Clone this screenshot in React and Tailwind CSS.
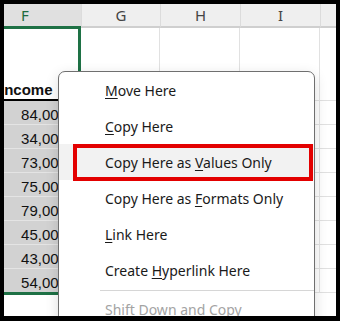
import React from 'react';

const values = ['84,000', '34,000', '73,000', '75,000', '79,000', '45,000', '43,000', '54,000'];

const Key = ({ children }) => (
    <span className="underline underline-offset-2 decoration-1">{children}</span>
);

const MenuItem = ({ children, active, disabled }) => (
    <div className={`relative h-[36px] flex items-center pl-[46px] ${active ? 'bg-[#f2f2f2]' : ''} ${disabled ? 'text-[#a3a3a3]' : 'text-[#1a1a1a]'}`}>
        <span>{children}</span>
        {active && (
            // red annotation box drawn over the hovered item
            <div className="absolute left-[14px] right-[1px] top-0 bottom-[-1px] border-4 border-[#e30000]" />
        )}
    </div>
);

const GridColumn = ({ width, last }) => (
    <div className={`flex flex-col shrink-0 ${last ? 'flex-1' : 'border-r border-[#e1e1e1]'}`} style={{ width }}>
        <div className="h-[73px] border-b border-[#e1e1e1]" />
        {values.map((v) => (
            <div key={v} className="h-[24px] border-b border-[#e1e1e1]" />
        ))}
    </div>
);

const App = () => {
    return (
        <div className="w-[340px] h-[321px] bg-black pt-[4px] pl-[4px] pr-[4px] pb-[5px]">
            <div className="relative w-full h-full overflow-hidden bg-white">
                {/* Column headers */}
                <div className="flex items-start h-[25px] font-['Noto_Sans',sans-serif] text-[15px]">
                    <div className="w-[112px] ml-[-35px] shrink-0 h-[25px] bg-[#e0e0e0] border-b-[3px] border-[#1e7145] flex items-center justify-center text-[#1e6b3f]">
                        F
                    </div>
                    <div className="w-[79px] shrink-0 h-[24px] bg-[#efefef] border-b-2 border-l border-[#cfcfcf] border-l-[#dcdcdc] flex items-center justify-center text-[#444]">
                        G
                    </div>
                    <div className="w-[80px] shrink-0 h-[24px] bg-[#efefef] border-b-2 border-l border-[#cfcfcf] border-l-[#dcdcdc] flex items-center justify-center text-[#444]">
                        H
                    </div>
                    <div className="w-[80px] shrink-0 h-[24px] bg-[#efefef] border-b-2 border-l border-[#cfcfcf] border-l-[#dcdcdc] flex items-center justify-center text-[#444]">
                        I
                    </div>
                    <div className="flex-1 h-[24px] bg-[#efefef] border-b-2 border-l border-[#cfcfcf] border-l-[#dcdcdc]" />
                </div>

                {/* Sheet body */}
                <div className="flex items-start font-['Liberation_Sans',Arial,sans-serif] text-[15px] text-[#111]">
                    {/* Column F, selected range */}
                    <div className="w-[112px] ml-[-35px] shrink-0 border-r-[3px] border-b-[3px] border-[#1e7145] flex flex-col">
                        <div className="h-[72px] border-b-2 border-black flex items-end pl-[31px] pb-[1px]">
                            <span className="font-bold leading-[17px]">Income</span>
                        </div>
                        {values.map((v, i) => (
                            <div
                                key={v}
                                className={`${i === values.length - 1 ? 'h-[23px]' : 'h-[24px] border-b border-[#e4e4e4]'} bg-[#d2d2d2] flex items-end justify-end pr-[11px] pb-[1px]`}
                            >
                                <span className="leading-[17px]">{v}</span>
                            </div>
                        ))}
                    </div>
                    <div className="flex flex-1 mt-[-1px]">
                        <GridColumn width={79} />
                        <GridColumn width={80} />
                        <GridColumn width={80} />
                        <GridColumn last />
                    </div>
                </div>

                {/* Drag context menu */}
                <div className="absolute left-[54px] top-[67px] w-[257px] h-[300px] rounded-[7px] border border-[#6f6f6f] bg-white shadow-[0_4px_14px_rgba(0,0,0,0.14)] font-['Noto_Sans',sans-serif] text-[14px]">
                    <MenuItem><Key>M</Key>ove Here</MenuItem>
                    <MenuItem><Key>C</Key>opy Here</MenuItem>
                    <MenuItem active>Copy Here as <Key>V</Key>alues Only</MenuItem>
                    <MenuItem>Copy Here as <Key>F</Key>ormats Only</MenuItem>
                    <MenuItem><Key>L</Key>ink Here</MenuItem>
                    <MenuItem>Create <Key>H</Key>yperlink Here</MenuItem>
                    <div className="ml-[41px] mt-[2px] h-px bg-[#d6d6d6]" />
                    <MenuItem disabled><Key>S</Key>hift Down and Copy</MenuItem>
                </div>
            </div>
        </div>
    );
};

export default App;
